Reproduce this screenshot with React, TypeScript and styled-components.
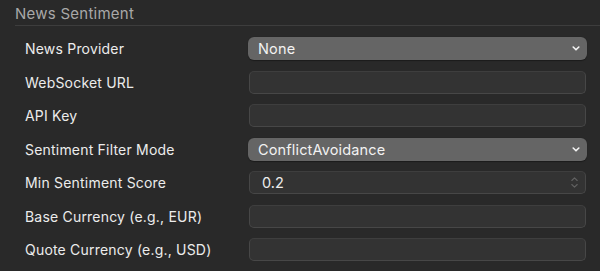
import React from "react";
import styled, { createGlobalStyle } from "styled-components";

const GlobalStyle = createGlobalStyle`
	html, body {
		margin: 0;
		padding: 0;
		background: #292929;
	}
	body {
		font-family: Inter, "Noto Sans", sans-serif;
		-webkit-font-smoothing: antialiased;
	}
`;

const Panel = styled.div`
	width: 600px;
	height: 271px;
	background: #292929;
	overflow: hidden;
`;

const SectionTitle = styled.div`
	margin-left: 15px;
	padding-top: 4px;
	height: 21px;
	line-height: 19px;
	font-size: 15px;
	letter-spacing: 0.25px;
	color: #a8a8a8;
	border-bottom: 1px solid #3d3d3d;
`;

const Rows = styled.div`
	display: grid;
	grid-template-columns: 223px 1fr;
	row-gap: 10.5px;
	padding: 11px 13px 0 25px;
`;

const Label = styled.label`
	height: 23px;
	line-height: 23px;
	font-size: 14px;
	letter-spacing: 0.2px;
	color: #ececec;
	white-space: nowrap;
`;

const Select = styled.div`
	position: relative;
	height: 23px;
	line-height: 23px;
	border-radius: 6px;
	background: #656565;
	padding-left: 10px;
	font-size: 14.5px;
	letter-spacing: 0.15px;
	color: #f2f2f2;
	box-shadow: 0 0.5px 1px rgba(0, 0, 0, 0.35);
`;

const Chevron = styled.svg`
	position: absolute;
	right: 7px;
	top: 9px;
`;

const Field = styled.div`
	position: relative;
	box-sizing: border-box;
	margin-left: 1px;
	margin-right: 1px;
	height: 23px;
	line-height: 21px;
	border-radius: 5px;
	background: #333333;
	border: 1px solid #474747;
	border-top-color: #3e3e3e;
	padding-left: 12px;
	font-size: 14.5px;
	color: #ececec;
`;

const Stepper = styled.svg`
	position: absolute;
	right: 6px;
	top: 3px;
`;

type Row =
	| { label: string; kind: "select"; value: string }
	| { label: string; kind: "text" }
	| { label: string; kind: "number"; value: string };

const rows: Row[] = [
	{ label: "News Provider", kind: "select", value: "None" },
	{ label: "WebSocket URL", kind: "text" },
	{ label: "API Key", kind: "text" },
	{ label: "Sentiment Filter Mode", kind: "select", value: "ConflictAvoidance" },
	{ label: "Min Sentiment Score", kind: "number", value: "0.2" },
	{ label: "Base Currency (e.g., EUR)", kind: "text" },
	{ label: "Quote Currency (e.g., USD)", kind: "text" },
];

function renderControl(row: Row) {
	if (row.kind === "select") {
		return (
			<Select>
				{row.value}
				<Chevron width="8" height="5" viewBox="0 0 8 5">
					<path
						d="M1.2 1 L4 3.8 L6.8 1"
						fill="none"
						stroke="#f4f4f4"
						strokeWidth="1.6"
						strokeLinecap="round"
						strokeLinejoin="round"
					/>
				</Chevron>
			</Select>
		);
	}
	if (row.kind === "number") {
		return (
			<Field>
				{row.value}
				<Stepper width="9" height="15" viewBox="0 0 9 15">
					<path
						d="M1.8 5.5 L4.5 2.8 L7.2 5.5 M1.8 9.5 L4.5 12.2 L7.2 9.5"
						fill="none"
						stroke="#626262"
						strokeWidth="1.1"
						strokeLinecap="round"
						strokeLinejoin="round"
					/>
				</Stepper>
			</Field>
		);
	}
	return <Field />;
}

function App() {
	return (
		<Panel>
			<GlobalStyle />
			<SectionTitle>News Sentiment</SectionTitle>
			<Rows>
				{rows.map((row) => (
					<React.Fragment key={row.label}>
						<Label>{row.label}</Label>
						{renderControl(row)}
					</React.Fragment>
				))}
			</Rows>
		</Panel>
	);
}

export default App;
